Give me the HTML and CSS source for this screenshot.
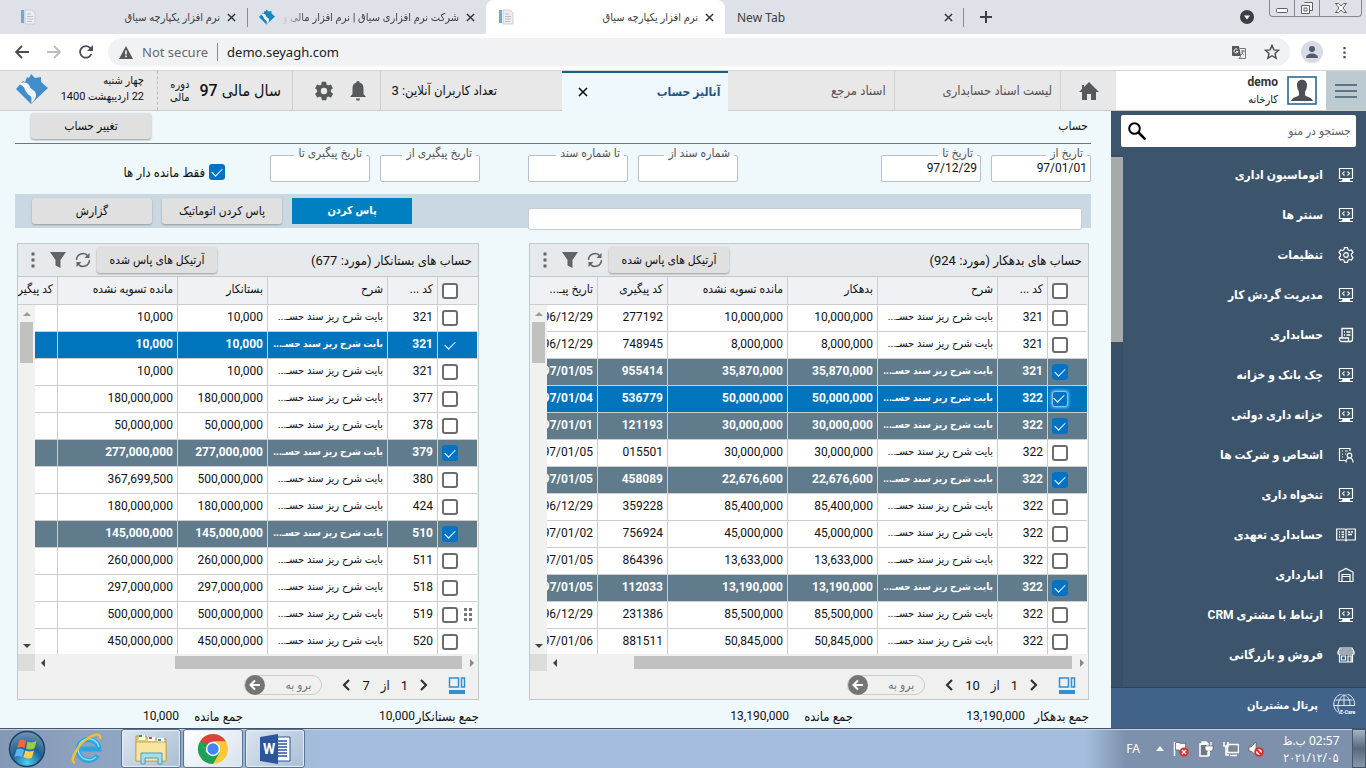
FILE: index.html
```html
<!DOCTYPE html>
<html lang="fa">
<head>
    <meta charset="UTF-8">
    <meta name="viewport" content="width=device-width, initial-scale=1.0">
    <title>نرم افزار یکپارچه سیاق</title>
    <link rel="stylesheet" href="styles.css">
</head>
<body>
    <!-- Shared icons -->
    <svg class="sprite" aria-hidden="true">
        <symbol id="i-close" viewBox="0 0 10 10"><path d="M1 1l8 8M9 1L1 9" stroke="currentColor" stroke-width="1.6" fill="none"/></symbol>
        <symbol id="i-page" viewBox="0 0 16 16"><path d="M1 1h3v13H1z" fill="#6fa9cc"/><path d="M5 1h7l3 3v11H5z" fill="#eceff1" stroke="#c3c8cc" stroke-width=".8"/><path d="M7 5h4M7 7.500h6M7 10h6M7 12.500h5" stroke="#b9bec2"/></symbol>
        <symbol id="i-seyagh" viewBox="0 0 32 30"><path d="M15 30L0 15l7-8 2 1 2-5 2 1 2-4 4 4 6-1v5l7 6z" fill="currentColor"/><path d="M3 10c6-3 10-1 11 3 1 3 6 3 6 8 0 4-3 7-5 8 1-4 1-6-2-8-5-3-3-9-10-11z" fill="#f1f3f5"/></symbol>
        <symbol id="i-gear" viewBox="0 0 24 24"><path fill="currentColor" d="M19.400 13a7.500 7.500 0 0 0 0-2l2.100-1.700c.2-.1.2-.4.1-.6l-2-3.500c-.1-.2-.4-.3-.6-.2l-2.500 1a7.300 7.300 0 0 0-1.700-1l-.4-2.600a.5.500 0 0 0-.5-.4h-4a.5.500 0 0 0-.5.400L9.100 5a7.700 7.700 0 0 0-1.700 1L5 5a.5.500 0 0 0-.6.200l-2 3.500c-.1.200-.1.500.1.600L4.600 11a8 8 0 0 0 0 2l-2.100 1.700c-.2.100-.2.400-.1.600l2 3.500c.1.200.4.300.6.200l2.500-1c.5.400 1.100.7 1.700 1l.4 2.600c0 .2.200.4.500.4h4c.2 0 .5-.2.500-.4l.4-2.600a7.300 7.300 0 0 0 1.700-1l2.500 1c.2.100.5 0 .6-.2l2-3.500c.1-.2.1-.5-.1-.6zM12 15.500a3.500 3.500 0 1 1 0-7 3.500 3.500 0 0 1 0 7z"/></symbol>
        <symbol id="i-code" viewBox="0 0 16 16"><path d="M1.500 1.500h13v10h-13z" fill="none" stroke="currentColor" stroke-width="1.200"/><path d="M6.500 4.500l-2 2 2 2M9.500 4.500l2 2-2 2" fill="none" stroke="currentColor" stroke-width="1.200"/><path d="M4.500 12h7l1 2H15v1H1v-1h2.500z" fill="currentColor"/></symbol>
        <symbol id="i-cog" viewBox="0 0 16 16"><path d="M6.500.7h3l.5 2 1.500.8 2-.6 1.500 2.600-1.500 1.500v2l1.500 1.500-1.500 2.600-2-.6-1.500.8-.5 2h-3l-.5-2-1.500-.8-2 .6L1 10.500 2.500 9V7L1 5.500l1.500-2.600 2 .6L6 2.700z" fill="none" stroke="currentColor" stroke-width="1.200"/><circle cx="8" cy="8" r="2.300" fill="none" stroke="currentColor" stroke-width="1.200"/></symbol>
        <symbol id="i-scroll" viewBox="0 0 16 16"><path d="M4 11V1.500h10.500v11a2 2 0 0 1-2 2h-9a2 2 0 0 1-2-2V11h9v2a1.500 1.500 0 0 0 2 1.500M6 5h1M6 8h1M8.500 5h4M8.500 8h4" fill="none" stroke="currentColor" stroke-width="1.300"/></symbol>
        <symbol id="i-people" viewBox="0 0 16 16"><path d="M12 4V1.500H1.500v12H8M4 4h1M7 4h2.500M4 7h1M7 7h1M4 10h1" fill="none" stroke="currentColor" stroke-width="1.200"/><circle cx="11.500" cy="8.500" r="2.300" fill="none" stroke="currentColor" stroke-width="1.200"/><path d="M8 15.500c0-6 7-6 7 0" fill="none" stroke="currentColor" stroke-width="1.200"/></symbol>
        <symbol id="i-book" viewBox="0 0 20 16"><path d="M.7 2H9l1 1 1-1h8.300v11H11l-1 1-1-1H.7zM10 3v10" fill="none" stroke="currentColor" stroke-width="1.200"/><path d="M3 5h1M5.500 5H8M3 7.500h1M5.500 7.500H8M3 10h1M5.500 10H8M12 5h2M15 5h2M12 7.500h4" stroke="currentColor" stroke-width="1.300"/></symbol>
        <symbol id="i-store" viewBox="0 0 16 16"><path d="M1 14.500V5l7-3.500L15 5v9.500zM4 14.500v-7h8v7M4 9.500h8" fill="none" stroke="currentColor" stroke-width="1.200"/></symbol>
        <symbol id="i-shop" viewBox="0 0 18 16"><path d="M3 1h12l2 4v2H1V5zM1 5h16M2.500 7v8h13V7M4.500 9h4v4h-4zM11 15V9h3v6M3 3h12" fill="none" stroke="currentColor" stroke-width="1.200"/></symbol>
        <symbol id="i-refresh" viewBox="0 0 16 16"><path d="M1.500 8a6.500 6.500 0 0 1 11.500-4M14.500 8A6.500 6.500 0 0 1 3 12" fill="none" stroke="currentColor" stroke-width="1.500"/><path d="M14.500 1v5h-5zM1.500 15v-5h5z" fill="currentColor"/></symbol>
        <symbol id="i-filter" viewBox="0 0 16 16"><path d="M0 0h16L10.500 8v8l-5-2.500V8z" fill="currentColor"/></symbol>
        <symbol id="i-dots" viewBox="0 0 4 16"><path d="M.5.500h3v3h-3zM.5 6.500h3v3h-3zM.5 12.500h3v3h-3z" fill="currentColor"/></symbol>
        <symbol id="i-layout" viewBox="0 0 18 17"><path d="M1.500 1h9v9h-9zM13.500 1h3v9h-3z" fill="none" stroke="currentColor" stroke-width="1.500"/><path d="M1 13h16v4H1z" fill="currentColor"/></symbol>
        <symbol id="i-next" viewBox="0 0 8 12"><path d="M1 1l5 5-5 5" fill="none" stroke="currentColor" stroke-width="2.200"/></symbol>
        <symbol id="i-prev" viewBox="0 0 8 12"><path d="M7 1L2 6l5 5" fill="none" stroke="currentColor" stroke-width="2.200"/></symbol>
        <symbol id="i-go" viewBox="0 0 20 20"><circle cx="10" cy="10" r="10" fill="#757575"/><path d="M15 10H6M10 5.500L5.500 10l4.500 4.500" fill="none" stroke="#fff" stroke-width="2"/></symbol>
    </svg>

    <!-- Browser tabs -->
    <header class="tab-strip">
        <div class="tab">
            <svg class="favicon"><use href="#i-page"/></svg>
            <span class="tab-title" dir="rtl">نرم افزار یکپارچه سیاق</span>
            <button class="tab-close" aria-label="Close"><svg><use href="#i-close"/></svg></button>
        </div>
        <div class="tab tab-line">
            <svg class="favicon favicon-blue"><use href="#i-seyagh"/></svg>
            <span class="tab-title fade" dir="rtl">شرکت نرم افزاری سیاق | نرم افزار مالی و</span>
            <button class="tab-close" aria-label="Close"><svg><use href="#i-close"/></svg></button>
        </div>
        <div class="tab tab-active">
            <svg class="favicon"><use href="#i-page"/></svg>
            <span class="tab-title" dir="rtl">نرم افزار یکپارچه سیاق</span>
            <button class="tab-close" aria-label="Close"><svg><use href="#i-close"/></svg></button>
        </div>
        <div class="tab tab-new">
            <span class="tab-title">New Tab</span>
            <button class="tab-close" aria-label="Close"><svg><use href="#i-close"/></svg></button>
        </div>
        <button class="new-tab" aria-label="New tab"><svg viewBox="0 0 12 12" width="12" height="12"><path d="M6 0v12M0 6h12" stroke="#3c4043" stroke-width="2"/></svg></button>
        <button class="tab-search" aria-label="Search tabs"><svg viewBox="0 0 14 14" width="14" height="14"><circle cx="7" cy="7" r="7" fill="#3c4043"/><path d="M4 5.500h6L7 9.500z" fill="#fff"/></svg></button>
        <div class="window-buttons">
            <button aria-label="Minimize"><svg viewBox="0 0 12 12" width="12" height="12"><rect x=".5" y="6.500" width="11" height="4" rx="1" fill="#fff" stroke="#5a6068"/></svg></button>
            <button aria-label="Restore"><svg viewBox="0 0 12 12" width="12" height="12"><path d="M3.500.500h8v8h-3M.5 3.500h8v8h-8zM3 6h3v3H3z" fill="#fff" stroke="#5a6068"/></svg></button>
            <button class="wide" aria-label="Close window"><svg viewBox="0 0 12 10" width="12" height="10"><path d="M.5.500h3L6 3 8.500.500h3L8 5l3.500 4.500h-3L6 7 3.500 9.500h-3L4 5z" fill="#fff" stroke="#5a6068"/></svg></button>
        </div>
    </header>

    <!-- Address bar -->
    <div class="nav-bar">
        <button aria-label="Back"><svg viewBox="0 0 14 14" width="14" height="14"><path d="M14 7H1.500M7 1L1 7l6 6" fill="none" stroke="#4a4d51" stroke-width="1.800"/></svg></button>
        <button aria-label="Forward"><svg viewBox="0 0 14 14" width="14" height="14"><path d="M0 7h12.500M7 1l6 6-6 6" fill="none" stroke="#b9bbbe" stroke-width="1.800"/></svg></button>
        <button aria-label="Reload"><svg viewBox="0 0 14 14" width="14" height="14"><path d="M12.300 9A5.800 5.800 0 1 1 11 2.800l1.500 1.500" fill="none" stroke="#4a4d51" stroke-width="1.800"/><path d="M14 0v6H8z" fill="#4a4d51"/></svg></button>
        <div class="address">
            <svg viewBox="0 0 14 13" width="14" height="13"><path d="M7 0l7 13H0z" fill="#55585c"/><path d="M7 4.500v4M7 9.500v1.800" stroke="#fff" stroke-width="1.500"/></svg>
            <span class="not-secure">Not secure</span>
            <input class="url" type="text" value="demo.seyagh.com" aria-label="Address">
            <svg viewBox="0 0 14 14" width="14" height="14"><path d="M0 1h7l2 10H1a1 1 0 0 1-1-1z" fill="#55585c"/><path d="M8 3.500h5.500v10H7l2-2.500M9 6h4M11 5v1c0 2-1 3-2 4M10 7c0 1 1 2 2 3" fill="none" stroke="#777"/><path d="M5.500 4.500A2 2 0 1 0 6 6.500H4" fill="none" stroke="#fff"/></svg>
            <svg viewBox="0 0 16 16" width="16" height="16"><path d="M8 1.500l1.900 4.400 4.800.4L11 9.500l1.100 4.700L8 11.700l-4.100 2.500L5 9.500 1.300 6.300l4.800-.4z" fill="none" stroke="#4a4d51" stroke-width="1.400"/></svg>
        </div>
        <button class="profile" aria-label="Profile"><svg viewBox="0 0 14 14" width="14" height="14"><circle cx="7" cy="4" r="3" fill="#525a6b"/><path d="M1 13c0-6 12-6 12 0z" fill="#525a6b"/></svg></button>
        <button aria-label="Menu"><svg class="dots-small"><use href="#i-dots"/></svg></button>
    </div>

    <div class="app" dir="rtl">
        <div class="app-header">
            <button class="burger" aria-label="منو"><svg viewBox="0 0 22 16" width="22" height="16"><path d="M0 2h22M0 8h22M0 14h22" stroke="#5f7685" stroke-width="2"/></svg></button>
            <div class="user">
                <svg class="avatar" viewBox="0 0 30 29"><rect x="1" y="1" width="28" height="27" fill="#fff" stroke="#1c5f88" stroke-width="1.500"/><path d="M10 9c0-7 10-7 10 0 0 3-1 5-2 7v3c1 2 7 2 8 6H4c1-4 7-4 8-6v-3c-1-2-2-4-2-7z" fill="#4d4f52"/></svg>
                <div class="user-name"><b>demo</b><span>کارخانه</span></div>
            </div>
            <a class="home" href="#" aria-label="خانه"><svg viewBox="0 0 20 18" width="20" height="18"><path d="M10 0l10 10h-3v8h-5v-6H8v6H3v-8H0L3 7V3h2v2z" fill="#58595b"/></svg></a>
            <nav class="app-tabs">
                <a href="#" class="app-tab">لیست اسناد حسابداری</a>
                <a href="#" class="app-tab">اسناد مرجع</a>
                <div class="app-tab current"><a href="#">آنالیز حساب</a><button aria-label="بستن"><svg viewBox="0 0 10 10" width="10" height="10"><path d="M1 1l8 8M9 1L1 9" stroke="#111" stroke-width="1.600"/></svg></button></div>
            </nav>
            <div class="online">تعداد کاربران آنلاین: 3</div>
            <div class="tools">
                <button aria-label="اعلان"><svg viewBox="0 0 16 20" width="16" height="20"><path d="M8 0c1 0 1.500.7 1.500 1.500C12 2 13.500 4 13.500 7v6l2.500 3H0l2.500-3V7c0-3 1.500-5 4-5.500C6.500.700 7 0 8 0zM6 17.500h4c0 3-4 3-4 0z" fill="#58595b"/></svg></button>
                <button aria-label="تنظیمات"><svg class="gear"><use href="#i-gear"/></svg></button>
            </div>
            <div class="fiscal"><span class="fiscal-year">سال مالی 97</span><span class="fiscal-label">دوره<br>مالی</span></div>
            <div class="today">چهار شنبه<br>22 اردیبهشت 1400</div>
            <svg class="logo"><use href="#i-seyagh"/></svg>
        </div>

        <div class="app-body">
            <aside class="sidebar">
                <div class="search">
                    <input type="text" placeholder="جستجو در منو" aria-label="جستجو در منو">
                    <svg viewBox="0 0 18 18" width="18" height="18"><circle cx="6.500" cy="6.500" r="5.300" fill="none" stroke="#000" stroke-width="2"/><path d="M10.500 10.500l7 7" stroke="#000" stroke-width="2.500"/></svg>
                </div>
                <nav class="menu">
                    <a href="#"><svg><use href="#i-code"/></svg>اتوماسیون اداری</a>
                    <a href="#"><svg><use href="#i-code"/></svg>سنتر ها</a>
                    <a href="#"><svg><use href="#i-cog"/></svg>تنظیمات</a>
                    <a href="#"><svg><use href="#i-code"/></svg>مدیریت گردش کار</a>
                    <a href="#"><svg><use href="#i-scroll"/></svg>حسابداری</a>
                    <a href="#"><svg><use href="#i-code"/></svg>چک بانک و خزانه</a>
                    <a href="#"><svg><use href="#i-code"/></svg>خزانه داری دولتی</a>
                    <a href="#"><svg><use href="#i-people"/></svg>اشخاص و شرکت ها</a>
                    <a href="#"><svg><use href="#i-code"/></svg>تنخواه داری</a>
                    <a href="#"><svg><use href="#i-book"/></svg>حسابداری تعهدی</a>
                    <a href="#"><svg><use href="#i-store"/></svg>انبارداری</a>
                    <a href="#"><svg><use href="#i-code"/></svg>ارتباط با مشتری CRM</a>
                    <a href="#"><svg><use href="#i-shop"/></svg>فروش و بازرگانی</a>
                </nav>
                <a class="portal" href="#">
                    <svg viewBox="0 0 24 22" width="24" height="22"><g fill="none" stroke="#dce8f2"><path d="M6 18.500A10.500 10.500 0 1 1 22.500 12"/><path d="M8 20C3 12 8 2 12 1c4 1 6 5 6 10M12 1v11M1.500 11.500h21M3.500 6h17"/></g><text x="8" y="20" class="portal-mark">E-Care</text></svg>
                    پرتال مشتریان
                </a>
            </aside>

            <main class="content">
                <div class="title-row">
                    <span>حساب</span>
                    <button class="btn">تغییر حساب</button>
                </div>

                <div class="filters split">
                    <div class="filter-group">
                        <div class="field"><input id="date-from" type="text" value="97/01/01"><label for="date-from">تاریخ از</label></div>
                        <div class="field"><input id="date-to" type="text" value="97/12/29"><label for="date-to">تاریخ تا</label></div>
                        <div class="field push"><input id="doc-from" type="text"><label for="doc-from">شماره سند از</label></div>
                        <div class="field"><input id="doc-to" type="text"><label for="doc-to">تا شماره سند</label></div>
                    </div>
                    <div class="filter-group">
                        <div class="field"><input id="track-from" type="text"><label for="track-from">تاریخ پیگیری از</label></div>
                        <div class="field"><input id="track-to" type="text"><label for="track-to">تاریخ پیگیری تا</label></div>
                        <label class="only-open"><input type="checkbox" class="check" checked>فقط مانده دار ها</label>
                    </div>
                </div>

                <div class="actions split">
                    <input class="note" type="text" aria-label="شرح">
                    <div class="action-buttons">
                        <button class="btn btn-primary">پاس کردن</button>
                        <button class="btn">پاس کردن اتوماتیک</button>
                        <button class="btn">گزارش</button>
                    </div>
                </div>

                <div class="panels">
                    <section class="panel">
                        <div class="panel-bar">
                            <span class="panel-title">حساب های بدهکار (مورد: 924)</span>
                            <button class="btn">آرتیکل های پاس شده</button>
                            <button class="icon-btn" aria-label="بازخوانی"><svg><use href="#i-refresh"/></svg></button>
                            <button class="icon-btn" aria-label="فیلتر"><svg><use href="#i-filter"/></svg></button>
                            <button class="icon-btn" aria-label="بیشتر"><svg><use href="#i-dots"/></svg></button>
                        </div>
                        <div class="grid">
                            <table>
                                <colgroup><col class="c-check"><col class="c-code"><col class="c-desc"><col class="c-sum"><col class="c-rest"><col class="c-track"><col class="c-date"></colgroup>
                                <thead><tr><th><input type="checkbox" class="check" aria-label="همه"></th><th>کد ...</th><th>شرح</th><th>بدهکار</th><th>مانده تسویه نشده</th><th>کد پیگیری</th><th>تاریخ پیـ...</th></tr></thead>
                                <tbody id="debtors"></tbody>
                            </table>
                            <div class="v-scroll"><i class="up"></i><i class="v-thumb"></i><i class="down"></i></div>
                        </div>
                        <div class="h-scroll"><i class="right"></i><i class="h-thumb"></i><i class="left"></i><i class="corner"></i></div>
                        <div class="pager">
                            <svg class="layout-icon"><use href="#i-layout"/></svg>
                            <button aria-label="بعدی"><svg><use href="#i-next"/></svg></button>
                            <span>1</span><span>از</span><span>10</span>
                            <button aria-label="قبلی"><svg><use href="#i-prev"/></svg></button>
                            <div class="goto"><input type="text" placeholder="برو به" aria-label="برو به"><button aria-label="برو"><svg><use href="#i-go"/></svg></button></div>
                        </div>
                    </section>

                    <section class="panel">
                        <div class="panel-bar">
                            <span class="panel-title">حساب های بستانکار (مورد: 677)</span>
                            <button class="btn">آرتیکل های پاس شده</button>
                            <button class="icon-btn" aria-label="بازخوانی"><svg><use href="#i-refresh"/></svg></button>
                            <button class="icon-btn" aria-label="فیلتر"><svg><use href="#i-filter"/></svg></button>
                            <button class="icon-btn" aria-label="بیشتر"><svg><use href="#i-dots"/></svg></button>
                        </div>
                        <div class="grid">
                            <table>
                                <colgroup><col class="c-check"><col class="c-code"><col class="c-desc"><col class="c-sum"><col class="c-rest"><col class="c-track"></colgroup>
                                <thead><tr><th><input type="checkbox" class="check" aria-label="همه"></th><th>کد ...</th><th>شرح</th><th>بستانکار</th><th>مانده تسویه نشده</th><th>کد پیگیری</th></tr></thead>
                                <tbody id="creditors"></tbody>
                            </table>
                            <div class="v-scroll"><i class="up"></i><i class="v-thumb"></i><i class="down"></i></div>
                        </div>
                        <div class="h-scroll"><i class="right"></i><i class="h-thumb short"></i><i class="left"></i><i class="corner"></i></div>
                        <div class="pager">
                            <svg class="layout-icon"><use href="#i-layout"/></svg>
                            <button aria-label="بعدی"><svg><use href="#i-next"/></svg></button>
                            <span>1</span><span>از</span><span>7</span>
                            <button aria-label="قبلی"><svg><use href="#i-prev"/></svg></button>
                            <div class="goto"><input type="text" placeholder="برو به" aria-label="برو به"><button aria-label="برو"><svg><use href="#i-go"/></svg></button></div>
                        </div>
                    </section>

                    <div class="totals">
                        <div><span>جمع بدهکار</span>13,190,000</div>
                        <div><span>جمع مانده</span>13,190,000</div>
                    </div>
                    <div class="totals">
                        <div><span>جمع بستانکار</span>10,000</div>
                        <div><span>جمع مانده</span>10,000</div>
                    </div>
                </div>
            </main>
        </div>
    </div>

    <!-- Windows taskbar -->
    <footer class="taskbar">
        <button class="start" aria-label="Start">
            <svg viewBox="0 0 38 38" width="38" height="38"><defs><radialGradient id="orb" cx=".5" cy=".9" r=".9"><stop offset="0" stop-color="#4fd0f5"/><stop offset=".5" stop-color="#1c6294"/><stop offset="1" stop-color="#7494b4"/></radialGradient></defs><circle cx="19" cy="19" r="17.500" fill="url(#orb)" stroke="#1d4566" stroke-width="1.500"/><path d="M11 11c3-2 5-1 7 0l-1.500 7c-3-1.500-5-1-7.500 0z" fill="#ee6a35"/><path d="M19.500 11.500c3 1.500 6 1 9-.5l-2 7.500c-3 1.500-6 1-8.500 0z" fill="#9dcb4a"/><path d="M8.500 19.500c3-1.500 5-1 7.500.5l-2 7c-2-1.500-5-1.500-7.500 0z" fill="#62b2ea"/><path d="M17.500 20.500c3 1.500 6 1 8.500 0l-2 7c-3 1.500-6 1-8.500-.5z" fill="#fbd04c"/></svg>
        </button>
        <button class="task task-flat" aria-label="Internet Explorer">
            <svg viewBox="0 0 34 34" width="34" height="34"><path d="M27.500 23.500a10.500 10.500 0 1 1 1.500-6.500H11" fill="none" stroke="#2aa5e0" stroke-width="5"/><path d="M26 25a10.500 10.500 0 1 1 3-10" fill="none" stroke="#8adbf8" stroke-width="1.500"/><path d="M5 31C-2 29 9 11 20 5c6-3 11-4 10 2" fill="none" stroke="#f2c02e" stroke-width="2.500"/></svg>
        </button>
        <button class="task" aria-label="Explorer">
            <svg viewBox="0 0 34 32" width="34" height="32"><path d="M2 3h10l2 3h18v22H2z" fill="#e9cd73" stroke="#b79a44"/><path d="M5 2h6v5H5zM14 4h7v4h-7zM23 5h7v4h-7z" fill="#fff"/><path d="M5 2h3v2H5z" fill="#36a336"/><path d="M15 4h3v2h-3z" fill="#d8442f"/><path d="M24 6h3v2h-3z" fill="#3a8ad0"/><path d="M2 9h30v19H2z" fill="#f8e69f" stroke="#c9ac55"/><path d="M7 31V20h21v11h-4v-6H11v6z" fill="#a9dcf2" stroke="#4e9cc4"/></svg>
        </button>
        <button class="task task-on" aria-label="Chrome">
            <svg viewBox="0 0 32 32" width="32" height="32"><circle cx="16" cy="16" r="15" fill="#fcc934"/><path d="M16 16L3 8.500A15 15 0 0 1 29 8.500H16z" fill="#db4437"/><path d="M16 8.500h13L22.500 20 16 16z" fill="#fcc934"/><path d="M3 8.500A15 15 0 0 0 16 31l6.500-11.300L16 16 9.500 19.700z" fill="#1da05a"/><path d="M3 8.500l6.500 11.200 3-8.200z" fill="#1da05a"/><circle cx="16" cy="16" r="7.200" fill="#fff"/><circle cx="16" cy="16" r="5.700" fill="#4285f4"/></svg>
        </button>
        <button class="task" aria-label="Word">
            <svg viewBox="0 0 32 30" width="32" height="30"><path d="M16 3h15v24H16z" fill="#fff" stroke="#2b579a"/><path d="M18 7h10M18 10h10M18 13h10M18 16h10M18 19h10M18 22h10" stroke="#2b579a" stroke-width="1.400"/><path d="M1 3l18-3v30L1 27z" fill="#2b579a"/><text x="4" y="20" class="word-mark">W</text></svg>
        </button>
        <div class="tray">
            <span class="lang">FA</span>
            <svg viewBox="0 0 8 5" width="8" height="5"><path d="M4 0l4 5H0z" fill="#eef3f9"/></svg>
            <svg viewBox="0 0 16 16" width="16" height="16"><path d="M1.500 1v14" stroke="#fff" stroke-width="1.500"/><path d="M2.500 2c3-2 5 2 10 0v7c-5 2-7-1-10 0z" fill="#fff" stroke="#444" stroke-width=".6"/><circle cx="11" cy="11" r="4.500" fill="#d9302c"/><path d="M9 9l4 4M13 9l-4 4" stroke="#fff" stroke-width="1.500"/></svg>
            <svg viewBox="0 0 16 16" width="16" height="16"><rect x="2" y="3" width="8" height="12" fill="#6d7988" stroke="#fff" stroke-width="1.500"/><path d="M4 1h4v2H4zM9 1v4M13 1v4" stroke="#fff" fill="#fff" stroke-width="1.300"/><path d="M7 5h8v3c0 3-8 3-8 0z" fill="#fff" stroke="#333" stroke-width=".5"/><path d="M11 10v5" stroke="#fff" stroke-width="2"/></svg>
            <svg viewBox="0 0 16 16" width="16" height="16"><rect x="4.500" y="3.500" width="11" height="8" fill="#7c8795" stroke="#fff" stroke-width="1.500"/><path d="M7 14.500h7M1 1v4h4V1M3 5v9h3" fill="none" stroke="#fff" stroke-width="1.500"/></svg>
            <svg viewBox="0 0 16 16" width="16" height="16"><path d="M1 6h2l5-5v13L3 10H1z" fill="#fff" stroke="#444" stroke-width=".6"/><circle cx="11" cy="11" r="3.800" fill="#fff" stroke="#df2f24" stroke-width="2"/><path d="M8.500 8.500l5 5" stroke="#df2f24" stroke-width="2"/></svg>
            <div class="clock"><span dir="rtl">02:57 ب.ظ</span><span>۲۰۲۱/۱۲/۰۵</span></div>
        </div>
        <button class="show-desktop" aria-label="Show desktop"></button>
    </footer>

    <script src="script.js"></script>
</body>
</html>
```

FILE: styles.css
```css
* {
    box-sizing: border-box;
}

body {
    display: flex;
    flex-direction: column;
    height: 100vh;
    margin: 0;
    overflow: hidden;
    background-color: #eff8fa;
    font-family: Roboto, "DejaVu Sans Condensed", "DejaVu Sans", sans-serif;
    font-size: 12px;
    color: #111;
}

button, input {
    font: inherit;
    color: inherit;
}

button {
    display: flex;
    align-items: center;
    justify-content: center;
    padding: 0;
    border: none;
    background: none;
    cursor: pointer;
}

a {
    color: inherit;
    text-decoration: none;
}

svg {
    display: block;
    flex: none;
}

.sprite {
    display: none;
}

/* Browser tabs */
.tab-strip {
    display: flex;
    flex: none;
    height: 34px;
    padding-left: 8px;
    background-color: #dee1e7;
}

.tab {
    display: flex;
    align-items: center;
    gap: 7px;
    flex: 0 1 239px;
    min-width: 0;
    padding: 0 11px 0 12px;
    font-size: 11px;
}

.tab-line {
    background: linear-gradient(#888d93, #888d93) left center / 1px 19px no-repeat;
}

.tab-active {
    border-radius: 8px 8px 0 0;
    background-color: #fff;
}

.favicon {
    width: 16px;
    height: 16px;
}

.favicon-blue {
    color: #1487bd;
}

.tab-title {
    flex: 1;
    overflow: hidden;
    white-space: nowrap;
    color: #3c4043;
}

.fade {
    mask-image: linear-gradient(to right, transparent, #000 24px);
}

.tab-new {
    font-family: "Noto Sans", sans-serif;
    font-size: 12px;
    background: linear-gradient(#888d93, #888d93) right center / 1px 19px no-repeat;
}

.tab-close svg {
    width: 9px;
    height: 9px;
    color: #333;
}

.new-tab {
    width: 44px;
}

.tab-search {
    margin-left: auto;
    margin-right: 15px;
}

.window-buttons {
    display: flex;
    height: 17px;
    margin-right: 4px;
    border: 1px solid #85898f;
    border-top: none;
    border-radius: 0 0 4px 4px;
}

.window-buttons button {
    width: 25px;
    border-right: 1px solid #85898f;
}

.window-buttons .wide {
    width: 41px;
    border-right: none;
}

/* Address bar */
.nav-bar {
    display: flex;
    align-items: center;
    flex: none;
    height: 37px;
    padding: 0 6px;
    background-color: #fff;
    border-bottom: 1px solid #d0d3d8;
}

.nav-bar button {
    width: 32px;
    height: 28px;
}

.address {
    display: flex;
    align-items: center;
    flex: 1;
    height: 28px;
    margin: 0 11px 0 6px;
    padding: 0 10px 0 11px;
    gap: 9px;
    border-radius: 14px;
    background-color: #f1f2f4;
    font-family: "Noto Sans", sans-serif;
    font-size: 13px;
}

.address svg:last-child {
    margin-left: 9px;
}

.not-secure {
    padding-right: 9px;
    border-right: 1px solid #888;
    color: #66696d;
}

.url {
    flex: 1;
    min-width: 0;
    padding: 0;
    border: none;
    background: none;
    color: #202124;
}

.nav-bar .profile {
    width: 22px;
    height: 22px;
    margin-right: 5px;
    border-radius: 50%;
    background-color: #d7dbe4;
}

.dots-small {
    width: 3px;
    height: 13px;
    color: #4a4d51;
}

/* Application header */
.app {
    display: flex;
    flex-direction: column;
    flex: 1;
    min-height: 0;
}

.app-header {
    display: flex;
    flex: none;
    height: 40px;
    background-color: #e8e8e9;
    border-bottom: 1px solid #ccc;
}

.burger {
    width: 40px;
    background-color: #bccad2;
}

.user {
    display: flex;
    align-items: center;
    gap: 9px;
    width: 210px;
    padding-right: 9px;
    background-color: #fff;
}

.avatar {
    width: 30px;
    height: 29px;
}

.user-name {
    display: flex;
    flex-direction: column;
    font-size: 11px;
    line-height: 17px;
}

.user-name b {
    color: #333;
    font-size: 12px;
}

.home {
    display: flex;
    align-items: center;
    justify-content: center;
    width: 55px;
}

.app-tabs {
    display: grid;
    grid-template-columns: 1fr 1fr 1fr;
    flex: 1;
    min-width: 0;
    font-size: 13px;
}

.app-tab {
    display: flex;
    align-items: center;
    justify-content: space-between;
    padding: 0 8px;
    border-right: 1px solid #d2d2d2;
    color: #555;
}

.app-tab.current {
    margin-bottom: -1px;
    padding-left: 16px;
    border-right: none;
    border-top: 2px solid #1c627c;
    background-color: #eff8fc;
    color: #1f5785;
    font-size: 12px;
    font-weight: bold;
}

.online {
    display: flex;
    align-items: center;
    width: 182px;
    padding-right: 65px;
    border-left: 1px solid #ccc;
    font-size: 13px;
    white-space: nowrap;
}

.tools {
    display: flex;
    align-items: center;
    justify-content: space-between;
    width: 88px;
    padding: 0 14px 0 20px;
    border-left: 1px solid #ccc;
}

.gear {
    width: 22px;
    height: 22px;
    color: #58595b;
}

.fiscal {
    display: flex;
    align-items: center;
    gap: 10px;
    width: 135px;
    padding-right: 11px;
    border-left: 1px dashed #bbb;
    white-space: nowrap;
}

.fiscal-year {
    font-size: 16px;
    font-weight: 500;
}

.fiscal-label {
    font-size: 11px;
    line-height: 13px;
}

.today {
    width: 109px;
    padding: 2px 13px 0 0;
    font-size: 11px;
    line-height: 16px;
    white-space: nowrap;
}

.logo {
    width: 32px;
    height: 30px;
    margin: 3px 0 0 16px;
    color: #3f8dcb;
}

/* Sidebar */
.app-body {
    display: flex;
    flex: 1;
    min-height: 0;
}

.sidebar {
    display: flex;
    flex-direction: column;
    flex: 0 0 255px;
    background-color: #3c556c;
    color: #fff;
}

.search {
    display: flex;
    align-items: center;
    height: 32px;
    margin: 4px 10px 8px;
    padding: 0 5px 0 10px;
    border-radius: 2px;
    background-color: #fff;
}

.search input {
    flex: 1;
    min-width: 0;
    padding: 0;
    border: none;
    outline: none;
    color: #333;
}

.search input::placeholder {
    color: #666;
}

.search svg {
    margin-left: -3px;
}

.menu {
    flex: 1;
    min-height: 0;
    overflow: hidden;
    /* scrollbar track and thumb on the left edge */
    background:
        linear-gradient(#a6aaaa, #a6aaaa) left 0 top 2px / 12px 185px no-repeat,
        linear-gradient(#365067, #365067) left top / 12px 100% no-repeat;
}

.menu a {
    display: flex;
    align-items: center;
    height: 40px;
    padding-right: 10px;
    gap: 13px;
    font-size: 12px;
    font-weight: bold;
}

.menu svg {
    width: 20px;
    height: 16px;
}

.portal {
    display: flex;
    align-items: center;
    flex: none;
    gap: 14px;
    height: 41px;
    padding: 0 10px 6px 0;
    border-top: 1px solid #2c4359;
    background-color: #41638a;
    font-size: 11px;
    font-weight: bold;
}

.portal-mark {
    direction: ltr;
    font-size: 5px;
    fill: #fff;
}

/* Main content */
.content {
    display: flex;
    flex-direction: column;
    flex: 1;
    min-width: 0;
    padding: 0 20px 0 15px;
}

.title-row {
    display: flex;
    align-items: center;
    justify-content: space-between;
    height: 33px;
    padding: 0 3px 2px 16px;
    border-bottom: 1px solid #6e777c;
}

.btn {
    width: 120px;
    height: 26px;
    border-radius: 3px;
    background-color: #e0e0e1;
    box-shadow: 0 1px 2px #999;
    white-space: nowrap;
}

.btn-primary {
    border-radius: 0;
    background-color: #0080c0;
    box-shadow: none;
    color: #fff;
    font-size: 11px;
    font-weight: bold;
}

.split {
    display: grid;
    grid-template-columns: 563fr 465fr;
    gap: 48px;
}

.filters {
    padding: 11px 0 12px;
}

.filter-group {
    display: flex;
    align-items: center;
    gap: 10px;
}

.push {
    margin-right: auto;
}

.field {
    position: relative;
    width: 100px;
}

.field input {
    display: block;
    width: 100%;
    height: 27px;
    padding: 0 3px 2px;
    border: 1px solid #b9bfc4;
    border-radius: 2px;
    background-color: #fff;
}

.field label {
    position: absolute;
    top: -9px;
    right: 4px;
    padding: 0 4px;
    background: linear-gradient(#eff8fa 10px, #fff 10px);
    color: #555;
    line-height: 14px;
    white-space: nowrap;
}

.only-open {
    display: flex;
    align-items: center;
    gap: 4px;
    margin: 7px 35px 0 0;
    font-size: 13px;
    white-space: nowrap;
}

.check {
    display: block;
    position: relative;
    flex: none;
    width: 16px;
    height: 16px;
    margin: 0;
    appearance: none;
    border: 2px solid #6d6d6d;
    border-radius: 3px;
    background-color: #fff;
}

.check:checked {
    border-color: #0073c4;
    background-color: #0073c4;
}

.check:checked::after {
    content: "";
    position: absolute;
    top: 2px;
    left: 1px;
    width: 9px;
    height: 5px;
    border-left: 1px solid #fff;
    border-bottom: 1px solid #fff;
    transform: rotate(-45deg);
}

.actions {
    height: 34px;
    background-color: #cad8e3;
}

.note {
    height: 22px;
    margin: 14px 9px 0 0;
    border: 1px solid #c3ced6;
    border-radius: 2px;
    background-color: #fff;
}

.action-buttons {
    display: flex;
    align-items: center;
    justify-content: flex-end;
    gap: 10px;
    padding: 0 0 3px 17px;
}

.panels {
    display: grid;
    flex: 1;
    min-height: 0;
    grid-template-columns: minmax(0, 560fr) minmax(0, 462fr);
    grid-template-rows: minmax(0, 1fr) 28px;
    column-gap: 50px;
    padding: 15px 2px 0;
}

.panel {
    display: flex;
    flex-direction: column;
    min-width: 0;
    min-height: 0;
    border: 1px solid #c3c8cc;
    background-color: #f0f0f1;
}

.panel-bar {
    display: flex;
    align-items: center;
    flex: none;
    height: 33px;
    padding: 0 6px 0 13px;
    background-color: #e6eaed;
    border-bottom: 1px solid #c3c8cc;
}

.panel-title {
    flex: 1;
    font-size: 13px;
}

.icon-btn {
    width: 25px;
    color: #606467;
}

.panel-bar .btn {
    margin-left: 2px;
}

.icon-btn svg {
    width: 16px;
    height: 16px;
}

.icon-btn:last-child {
    width: 4px;
    margin-right: 10px;
}

.grid {
    position: relative;
    flex: 1;
    min-height: 0;
    padding-right: 1px;
    overflow: hidden;
}

table {
    width: 100%;
    table-layout: fixed;
    border-collapse: separate;
    border-spacing: 0;
}

.c-check { width: 40px; }
.c-code { width: 50px; }
.c-desc { width: 120px; }
.c-sum { width: 90px; }
.c-rest { width: 120px; }
.c-track { width: 70px; }
.c-date { width: 70px; }

th, td {
    height: 27px;
    padding: 0 4px 3px 2px;
    border-left: 1px solid #cdcdcd;
    border-bottom: 1px solid #cdcdcd;
    background-color: #fff;
    font-weight: normal;
    text-align: right;
    white-space: nowrap;
    overflow: hidden;
}

th {
    height: 28px;
    background-color: #f0f1f5;
}

th:first-child, td:first-child {
    padding: 0 19px 0 0;
}

td.desc {
    font-size: 11px;
}

.picked td {
    background-color: #607b8b;
    color: #fff;
    font-weight: bold;
}

.current-row td {
    background-color: #0075bd;
    color: #fff;
    font-weight: bold;
}

/* bold runs wider, keep it inside the column */
.picked .desc, .current-row .desc {
    font-size: 10px;
}

.glow .check {
    border: 1px solid #8cc4f0;
    box-shadow: 0 0 3px 1px #6db6ee;
}

td.handle {
    padding-right: 5px;
}

.handle div {
    display: flex;
    align-items: center;
    gap: 6px;
}

.handle svg {
    width: 8px;
    height: 14px;
}

/* Drawn scrollbars */
.v-scroll {
    position: absolute;
    top: 28px;
    bottom: 0;
    left: 0;
    display: flex;
    flex-direction: column;
    align-items: center;
    width: 17px;
    padding: 7px 0 6px;
    background-color: #f1f1f1;
}

.v-thumb {
    width: 13px;
    height: 41px;
    margin-top: 6px;
    background-color: #c1c1c1;
}

.up {
    border: 4px solid transparent;
    border-top: none;
    border-bottom-color: #999;
}

.down {
    margin-top: auto;
    border: 4px solid transparent;
    border-bottom: none;
    border-top-color: #444;
}

.h-scroll {
    display: flex;
    align-items: center;
    flex: none;
    height: 17px;
    padding-right: 4px;
    background-color: #f1f1f1;
}

.right {
    border: 4px solid transparent;
    border-right: none;
    border-left-color: #888;
}

.left {
    margin-right: auto;
    border: 4px solid transparent;
    border-left: none;
    border-right-color: #444;
}

.h-thumb {
    flex: 0 0 79%;
    height: 13px;
    margin-right: 8px;
    background-color: #c1c1c1;
}

.h-thumb.short {
    flex-basis: 63%;
}

.corner {
    align-self: stretch;
    width: 17px;
    margin-right: 6px;
    background-color: #dcdcdc;
}

.pager {
    display: flex;
    align-items: center;
    flex: none;
    gap: 11px;
    height: 28px;
    padding-right: 12px;
    font-size: 13px;
}

.pager > button {
    width: 10px;
    color: #333;
}

.pager > button svg {
    width: 8px;
    height: 12px;
}

.pager .layout-icon {
    width: 18px;
    height: 17px;
    margin-left: 8px;
    color: #2d8fd5;
}

.goto {
    display: flex;
    align-items: center;
    width: 78px;
    height: 20px;
    margin-right: 8px;
    border: 1px solid #ccc;
    border-radius: 10px;
    font-size: 12px;
}

.goto input {
    flex: 1;
    min-width: 0;
    padding: 0 10px 0 0;
    border: none;
    background: none;
}

.goto svg {
    width: 20px;
    height: 20px;
}

.totals {
    display: flex;
    align-items: center;
    padding-top: 4px;
    font-size: 12px;
}

.totals div {
    display: flex;
    flex: 0 0 236px;
}

.totals span {
    width: 64px;
    font-size: 13px;
    white-space: nowrap;
}

/* Taskbar */
.taskbar {
    display: flex;
    flex: none;
    height: 40px;
    border-top: 1px solid #45536a;
    background: linear-gradient(to right, #8499b5, #a4bddd 320px, #a4bddd calc(100% - 280px), #7d90ac calc(100% - 240px));
    box-shadow: inset 0 1px #c4d3e6;
}

.start {
    width: 54px;
    flex: none;
}

.task {
    width: 60px;
    margin: 0 1px;
    border: 1px solid #5c7390;
    border-radius: 3px;
    background: linear-gradient(135deg, #dbe5ef, #a9bed6);
    box-shadow: inset 0 0 1px 1px #e6eef6;
}

.task-flat {
    width: 64px;
    border: none;
    background: none;
    box-shadow: none;
}

.task-on {
    background: linear-gradient(135deg, #fff, #d7e3ef);
}

.word-mark {
    font-size: 14px;
    font-weight: bold;
    fill: #fff;
}

.tray {
    display: flex;
    align-items: center;
    gap: 9px;
    margin-left: auto;
    color: #fff;
    font-family: "Noto Sans", "DejaVu Sans Condensed", sans-serif;
}

.lang {
    margin-right: 7px;
}

.clock {
    display: flex;
    flex-direction: column;
    align-items: center;
    width: 76px;
    line-height: 17px;
}

.show-desktop {
    width: 14px;
    margin-left: 3px;
    border: 1px solid #47556a;
    background: linear-gradient(#a5b3c4, #59697e 50%, #8796ab);
}
```

FILE: script.js
```js
const DESC = "بایت شرح ریز سند حسـ...";

// code, amount, remaining, tracking code, date, row state
const debtors = [
    ["321", "10,000,000", "10,000,000", "277192", "96/12/29", ""],
    ["321", "8,000,000", "8,000,000", "748945", "96/12/29", ""],
    ["321", "35,870,000", "35,870,000", "955414", "97/01/05", "picked"],
    ["322", "50,000,000", "50,000,000", "536779", "97/01/04", "current-row glow"],
    ["322", "30,000,000", "30,000,000", "121193", "97/01/01", "picked"],
    ["322", "30,000,000", "30,000,000", "015501", "97/01/05", ""],
    ["322", "22,676,600", "22,676,600", "458089", "97/01/05", "picked"],
    ["322", "85,400,000", "85,400,000", "359228", "96/12/29", ""],
    ["322", "45,000,000", "45,000,000", "756924", "97/01/02", ""],
    ["322", "13,633,000", "13,633,000", "864396", "97/01/05", ""],
    ["322", "13,190,000", "13,190,000", "112033", "97/01/05", "picked"],
    ["322", "85,500,000", "85,500,000", "231386", "96/12/29", ""],
    ["322", "50,845,000", "50,845,000", "881511", "97/01/06", ""]
];

const creditors = [
    ["321", "10,000", "10,000", "", ""],
    ["321", "10,000", "10,000", "", "current-row"],
    ["321", "10,000", "10,000", "", ""],
    ["377", "180,000,000", "180,000,000", "", ""],
    ["378", "50,000,000", "50,000,000", "", ""],
    ["379", "277,000,000", "277,000,000", "", "picked"],
    ["380", "500,000,000", "367,699,500", "", ""],
    ["424", "180,000,000", "180,000,000", "", ""],
    ["510", "145,000,000", "145,000,000", "", "picked"],
    ["511", "260,000,000", "260,000,000", "", ""],
    ["518", "297,000,000", "297,000,000", "", ""],
    ["519", "500,000,000", "500,000,000", "", "", true],
    ["520", "450,000,000", "450,000,000", "", ""]
];

const HANDLE = '<svg viewBox="0 0 8 14"><path d="M0 0h3v3H0zM5 0h3v3H5zM0 5h3v3H0zM5 5h3v3H5zM0 10h3v3H0zM5 10h3v3H5z" fill="#777"/></svg>';

function fill(id, rows, cells) {
    let html = "";
    for (const row of rows) {
        const state = row[cells];
        const box = `<input type="checkbox" class="check" aria-label="${row[0]}"${state ? " checked" : ""}>`;
        html += `<tr class="${state}">`;
        html += row[cells + 1] ? `<td class="handle"><div>${HANDLE}${box}</div></td>` : `<td>${box}</td>`;
        html += `<td>${row[0]}</td><td class="desc">${DESC}</td>`;
        for (let i = 1; i < cells; i++) {
            html += `<td>${row[i]}</td>`;
        }
        html += "</tr>";
    }
    document.getElementById(id).innerHTML = html;
}

fill("debtors", debtors, 5);
fill("creditors", creditors, 4);
```
